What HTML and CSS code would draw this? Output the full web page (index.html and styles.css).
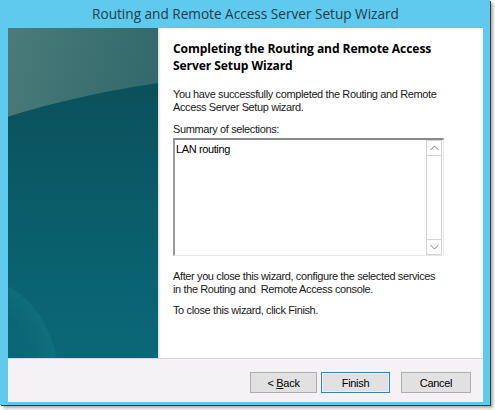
FILE: index.html
```html
<!DOCTYPE html>
<html>
<head>
<meta charset="utf-8">
<link rel="stylesheet" href="styles.css">
</head>
<body>
<div class="window">
  <div class="titlebar">Routing and Remote Access Server Setup Wizard</div>
  <div class="client">
    <div class="main">
      <div class="side"><div class="glow"></div></div>
      <div class="content">
        <h1 class="heading">Completing the Routing and Remote Access<br>Server Setup Wizard</h1>
        <p class="text intro">You have successfully completed the Routing and Remote<br>Access Server Setup wizard.</p>
        <p class="text label">Summary of selections:</p>
        <div class="listbox">
          <div class="listtext">LAN routing</div>
          <div class="scrollbar">
            <div class="sbtn"><svg width="9" height="6" viewBox="0 0 9 6"><path d="M0.5 5 L4.5 1 L8.5 5" fill="none" stroke="#7a7a7a" stroke-width="1"/></svg></div>
            <div class="track"></div>
            <div class="sbtn"><svg width="9" height="6" viewBox="0 0 9 6"><path d="M0.5 1 L4.5 5 L8.5 1" fill="none" stroke="#7a7a7a" stroke-width="1"/></svg></div>
          </div>
        </div>
        <p class="text after">After you close this wizard, configure the selected services<br>in the Routing and &nbsp;Remote Access console.</p>
        <p class="text close">To close this wizard, click Finish.</p>
      </div>
    </div>
    <div class="footer">
      <button class="btn">&lt; <u>B</u>ack</button>
      <button class="btn default">Finish</button>
      <button class="btn cancel">Cancel</button>
    </div>
  </div>
</div>
</body>
</html>
```
FILE: styles.css
```css
html, body {
  margin: 0;
  padding: 0;
  background: #ffffff;
}
body {
  width: 495px;
  height: 410px;
  overflow: hidden;
}
.window {
  width: 490px;
  height: 405px;
  background: #60c9ee;
  box-shadow: 1px 1px 0 #3a3a3a, 3px 3px 3px rgba(0,0,0,0.35);
  display: flex;
  flex-direction: column;
  box-sizing: border-box;
  padding: 0 7px 3px 8px;
}
.titlebar {
  height: 28px;
  line-height: 28px;
  text-align: center;
  font-family: "Open Sans", "Noto Sans", sans-serif;
  font-size: 13.6px;
  color: #1c3c4c;
  flex: none;
}
.client {
  flex: 1;
  display: flex;
  flex-direction: column;
  background: #ffffff;
}
.main {
  height: 330px;
  display: flex;
  flex: none;
}
.side {
  width: 150px;
  flex: none;
  position: relative;
  overflow: hidden;
  background: linear-gradient(105deg, #4b7b7a 0%, #3a6f70 45%, #2a6268 100%);
}
.side::before {
  content: "";
  position: absolute;
  left: -154px;
  top: 40px;
  width: 1032px;
  height: 340px;
  border-radius: 50%;
  background: linear-gradient(180deg, #0b4f59 0%, #0a5965 30%, #0a6371 65%, #0c6b7c 100%);
}
.glow {
  position: absolute;
  left: -120px;
  top: 250px;
  width: 170px;
  height: 200px;
  border-radius: 50%;
  background: radial-gradient(closest-side, rgba(24,130,138,0) 72%, rgba(24,130,138,0.35) 100%);
}
.content {
  flex: 1;
  background: #ffffff;
  border-left: 1px solid #e2e2e2;
  box-shadow: inset 2px 0 2px -1px #ececec;
  padding: 12px 0 0 14px;
  font-family: "Liberation Sans", Arial, sans-serif;
  color: #000000;
}
.heading {
  margin: 0;
  font-family: "Open Sans", "Noto Sans", sans-serif;
  font-weight: 700;
  font-size: 12.1px;
  line-height: 17px;
  letter-spacing: -0.1px;
  color: #000;
}
.text {
  margin: 0;
  font-size: 11px;
  line-height: 13px;
  letter-spacing: -0.38px;
  color: #1a1a1a;
}
.intro {
  margin-top: 14px;
}
.label {
  margin-top: 9px;
}
.listbox {
  margin-top: 2px;
  width: 271px;
  height: 118px;
  box-sizing: border-box;
  border-style: solid;
  border-width: 2px 1px 1px 2px;
  border-color: #8a8a8a #e8e8e8 #e8e8e8 #9a9a9a;
  display: flex;
  background: #fff;
}
.listtext {
  flex: 1;
  padding: 3px 0 0 1px;
  font-size: 11px;
  line-height: 13px;
  letter-spacing: -0.38px;
}
.scrollbar {
  width: 17px;
  display: flex;
  flex-direction: column;
  padding: 0 1px 0 0;
  box-sizing: border-box;
}
.sbtn {
  height: 16px;
  box-sizing: border-box;
  border: 1px solid #d4d4d4;
  display: flex;
  align-items: center;
  justify-content: center;
  background: #fff;
}
.track {
  flex: 1;
  border-left: 1px solid #d4d4d4;
  border-right: 1px solid #d4d4d4;
}
.after {
  margin-top: 14px;
}
.close {
  margin-top: 8px;
}
.footer {
  flex: 1;
  background: #f5f2f5;
  border-top: 1px solid #d8d8d8;
  display: flex;
  align-items: flex-start;
  padding: 13px 0 0 242px;
  box-sizing: border-box;
}
.btn {
  width: 67px;
  height: 21px;
  margin: 0 4px 0 0;
  padding: 0;
  border: 1px solid #adadad;
  background: #e1e1e1;
  font-family: "Liberation Sans", Arial, sans-serif;
  font-size: 11px;
  letter-spacing: -0.3px;
  color: #000;
}
.btn u {
  text-decoration: underline;
}
.default {
  width: 69px;
  border-color: #3d7fb8;
  box-shadow: inset 0 0 0 1px #e5f1fb;
}
.cancel {
  margin-left: 7px;
  width: 70px;
}
```
